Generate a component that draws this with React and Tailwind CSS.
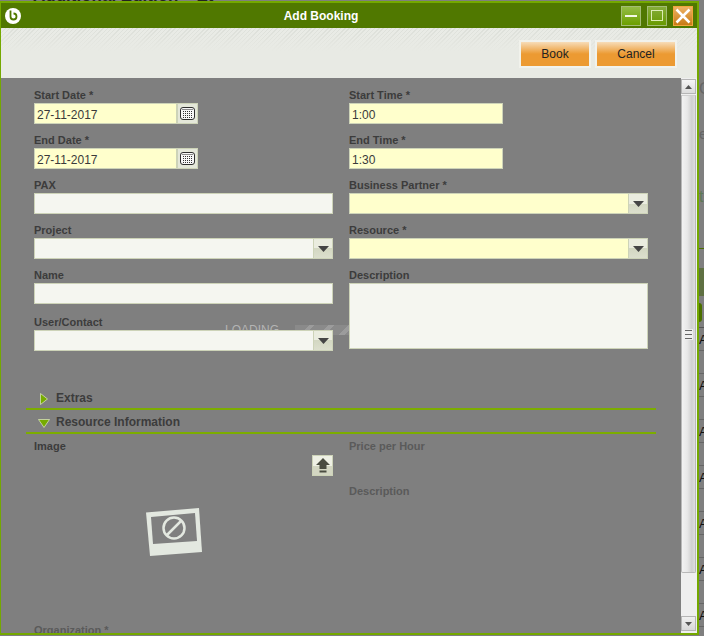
const sans = "font-['Liberation_Sans',Arial,sans-serif]"

function Label({ children, dim }) {
  return (
    <div className={`h-[11px] text-[11px] leading-[11px] font-bold ${dim ? 'text-[#5a5a5a]' : 'text-[#3c3c3c]'}`}>
      {children}
    </div>
  )
}

function Field({ label, children, className = '' }) {
  return (
    <div className={`flex flex-col ${className}`}>
      <Label>{label}</Label>
      <div className="mt-[2px]">{children}</div>
    </div>
  )
}

function TextBox({ value, required, className = 'w-full' }) {
  return (
    <div
      className={`h-[21px] border border-[#cdd3b8] px-[2px] text-[12px] leading-[23px] text-[#3a3a3a] ${required ? 'bg-[#ffffcc]' : 'bg-[#f5f6f0]'} ${className}`}
    >
      {value}
    </div>
  )
}

function Calendar() {
  return (
    <div className="w-[21px] h-[21px] border border-[#cdd3b8] bg-[#e4e7d9] flex items-center justify-center">
      <svg width="15" height="13" viewBox="0 0 15 13">
        <rect x="0.5" y="0.5" width="14" height="12" rx="2.5" fill="#f7f7f7" stroke="#2f2f2f" />
        <path d="M2 2.5h11" stroke="#8a8a8a" />
        {[4, 6, 8, 10].map((y) =>
          [3, 5, 7, 9, 11].map((x) => <rect key={`${x}-${y}`} x={x} y={y} width="1" height="1" fill="#333" />)
        )}
      </svg>
    </div>
  )
}

function DateBox({ value }) {
  return (
    <div className="flex">
      <TextBox value={value} required className="w-[143px]" />
      <Calendar />
    </div>
  )
}

function Arrow() {
  return (
    <div className="w-[20px] h-[21px] border border-[#cdd3b8] bg-[linear-gradient(#eaecdf_0%,#eaecdf_50%,#d3d7c2_50%,#dcdfcd_100%)] flex items-center justify-center">
      <svg width="11" height="6" viewBox="0 0 11 6">
        <path d="M0 0h11L5.500 6z" fill="#454545" />
      </svg>
    </div>
  )
}

function Combo({ required }) {
  return (
    <div className="flex">
      <TextBox required={required} className="flex-1 border-r-0" />
      <Arrow />
    </div>
  )
}

function WindowButton({ className, children }) {
  return <div className={`w-[20px] h-[20px] border flex items-center justify-center ${className}`}>{children}</div>
}

function OrangeButton({ children, className }) {
  return (
    <div className="border-[2px] border-[#f1f2ec]">
      <div className={`h-[24px] pb-[1px] bg-[linear-gradient(#f7dcb8_0%,#ec9a32_50%,#ec9a32_100%)] flex items-center justify-center text-[12px] text-[#222] ${className}`}>
        {children}
      </div>
    </div>
  )
}

function Section({ title, open }) {
  return (
    <div className="h-[24px] border-b-[2px] border-[#7cad00] flex items-center pt-[1px]">
      <div className="w-[30px] flex justify-center pl-[6px]">
        {open ? (
          <svg width="12" height="9" viewBox="0 0 12 9" className="mt-[4px]">
            <path d="M0.5 0.5h11L6 8.5z" fill="#76ab00" stroke="#e2ecc4" strokeWidth="0.7" />
          </svg>
        ) : (
          <svg width="8" height="12" viewBox="0 0 8 12" className="mt-[2px]">
            <path d="M0.500 0.500v11L7.500 6z" fill="#76ab00" stroke="#e2ecc4" strokeWidth="0.7" />
          </svg>
        )}
      </div>
      <span className="text-[12px] font-bold text-[#3c3c3c]">{title}</span>
    </div>
  )
}

function Scrollbar() {
  return (
    <div className="w-[16px] h-full shrink-0 flex flex-col bg-[#efefef] pt-[1px] pr-[1px] pb-[2px]">
      <div className="h-[15px] shrink-0 border border-[#b5b5b5] bg-[linear-gradient(#f6f6f6,#dcdcdc)] flex items-center justify-center">
        <svg width="7" height="4" viewBox="0 0 7 4"><path d="M0 4h7L3.500 0z" fill="#555" /></svg>
      </div>
      <div className="h-[478px] shrink-0 mt-[1px] border border-[#b8b8b8] border-t-[#d0d0d0] rounded-b-[2px] bg-[linear-gradient(90deg,#f2f2f2_0%,#e8e8e8_40%,#d0d0d0_75%,#dedede_100%)] flex items-center justify-center">
        <div className="w-[9px] h-[11px] bg-[#eeeeee] flex flex-col justify-between p-[1px]">
          <div className="h-px bg-[#666]" />
          <div className="h-px bg-[#666]" />
          <div className="h-px bg-[#666]" />
        </div>
      </div>
      <div className="flex-1" />
      <div className="h-[15px] shrink-0 border border-[#b5b5b5] bg-[linear-gradient(#f0f0f0,#d8d8d8)] flex items-center justify-center">
        <svg width="7" height="4" viewBox="0 0 7 4"><path d="M0 0h7L3.500 4z" fill="#555" /></svg>
      </div>
    </div>
  )
}

// slice of the page behind the dialog, visible down its right side
function PageStrip() {
  const rows = [0, 1, 2, 3, 4, 5, 6, 7, 8, 9, 10, 11, 12, 13]
  return (
    <div className="w-[5px] shrink-0 h-full overflow-hidden flex flex-col">
      <div className="h-[81px] shrink-0" />
      <div className="h-[14px] shrink-0 text-[16px] leading-[14px] text-[#666]">C</div>
      <div className="h-[32px] shrink-0" />
      <div className="h-[11px] shrink-0 text-[15px] leading-[11px] text-[#666]">e</div>
      <div className="h-[51px] shrink-0" />
      <div className="h-[14px] shrink-0 text-[16px] leading-[14px] text-[#5e7a55]">t</div>
      <div className="h-[44px] shrink-0" />
      <div className="h-px shrink-0 bg-[#4d6f00]" />
      <div className="h-[19px] shrink-0" />
      <div className="h-[28px] shrink-0 bg-[#5f7042]" />
      <div className="h-[7px] shrink-0" />
      <div className="h-[19px] w-[6px] shrink-0 ml-[-3px] rounded-full bg-[#4c7000]" />
      <div className="h-[5px] shrink-0" />
      <div className="h-px shrink-0 bg-[#555]" />
      {rows.map((i) => (
        <div key={i} className="h-[23px] shrink-0 border-b border-[#666] text-[13px] leading-[24px] text-[#111]">
          {i % 2 === 0 ? 'A' : ''}
        </div>
      ))}
    </div>
  )
}

export default function App() {
  return (
    <div className={`w-[704px] h-[636px] overflow-hidden flex flex-col bg-[#7f7f7f] ${sans}`}>
      <div className="h-[1px] shrink-0 overflow-hidden pl-[33px] flex gap-[18px] text-[17px] leading-[20px] font-bold text-[#222]">
        <div className="mt-[-14px] whitespace-nowrap">Additional Edition</div>
        <div className="mt-[-14px] whitespace-nowrap">Et</div>
      </div>
      <div className="h-[634px] shrink-0 flex">
        <div className="w-[699px] h-full shrink-0 flex flex-col border-l border-r-[2px] border-y-[2px] border-[#74a800] bg-[#7f7f7f]">
          <div className="h-[25px] shrink-0 bg-[#507800] flex items-center pl-[4px] pr-[4px]">
            <svg width="16" height="16" viewBox="0 0 16 16">
              <circle cx="8" cy="8" r="8" fill="#fff" />
              <path d="M5.500 2.500v6a3 3 0 1 0 3-3" fill="none" stroke="#507800" strokeWidth="1.800" />
            </svg>
            <div className="flex-1 text-center text-[12px] font-bold text-white">Add Booking</div>
            <div className="flex gap-[6px]">
              <WindowButton className="border-[#a3bd73] bg-[linear-gradient(#94bc45,#6ca000)]"><div className="w-[12px] h-[2px] bg-[#f4f8e6]" /></WindowButton>
              <WindowButton className="border-[#a3bd73] bg-[linear-gradient(#86ad3a,#689a00)]"><div className="w-[12px] h-[11px] border border-[#dcecb4]" /></WindowButton>
              <WindowButton className="border-[#f2a53c] bg-[linear-gradient(#eeb264,#c87a14)]">
                <svg width="16" height="16" viewBox="0 0 16 16"><path d="M1.500 1.500l13 13M14.500 1.500l-13 13" stroke="#fff" strokeWidth="2.500" /></svg>
              </WindowButton>
            </div>
          </div>
          <div className="h-[50px] shrink-0 bg-[linear-gradient(rgba(232,234,228,0)_0px,#e8eae4_24px),repeating-linear-gradient(135deg,#dcdfd9_0px,#dcdfd9_1px,#e9ebe6_1px,#e9ebe6_3px)] flex items-start justify-end gap-[4px] pt-[12px] pr-[20px]">
            <OrangeButton className="w-[68px]">Book</OrangeButton>
            <OrangeButton className="w-[78px]">Cancel</OrangeButton>
          </div>
          <div className="flex-1 min-h-0 flex">
            <div className="flex-1 min-w-0 h-full overflow-hidden relative">
              <div className="absolute left-[224px] top-[245px] text-[12px] leading-[14px] text-[#b4b4b4]">LOADING</div>
              <div className="absolute left-[294px] top-[247px] w-[55px] h-[10px] bg-[repeating-linear-gradient(135deg,#8a8a8a_0px,#8a8a8a_10px,#9c9c9c_10px,#9c9c9c_14px)]" />
              <div className="relative pl-[33px] pt-[12px] grid grid-cols-[299px_299px] gap-x-[16px] gap-y-[11px]">
                <Field label="Start Date *"><DateBox value="27-11-2017" /></Field>
                <Field label="Start Time *"><TextBox value="1:00" required className="w-[154px]" /></Field>
                <Field label="End Date *"><DateBox value="27-11-2017" /></Field>
                <Field label="End Time *"><TextBox value="1:30" required className="w-[154px]" /></Field>
                <Field label="PAX"><TextBox /></Field>
                <Field label="Business Partner *"><Combo required /></Field>
                <Field label="Project"><Combo /></Field>
                <Field label="Resource *"><Combo required /></Field>
                <Field label="Name"><TextBox /></Field>
                <Field label="Description" className="row-span-2"><div className="h-[66px] border border-[#cdd3b8] bg-[#f5f6f0]" /></Field>
                <Field label="User/Contact" className="mt-[2px]"><Combo /></Field>
              </div>
              <div className="mt-[35px] ml-[25px] w-[630px]">
                <Section title="Extras" />
                <Section title="Resource Information" open />
              </div>
              <div className="pl-[33px] pt-[7px] grid grid-cols-[299px_299px] gap-x-[16px]">
                <div>
                  <Label>Image</Label>
                  <div className="flex justify-end mt-[3px]">
                    <div className="w-[21px] h-[21px] border border-[#cdd3b8] bg-[linear-gradient(#eef0e4_0%,#eef0e4_55%,#d3d6c2_55%)] flex items-center justify-center">
                      <svg width="16" height="17" viewBox="0 0 16 17"><path d="M8 1L15 8h-3.500v4h-7V8H1zM4.500 13.500h7v2h-7z" fill="#4a4c40" /></svg>
                    </div>
                  </div>
                  <div className="flex justify-center pt-[32px] pr-[19px]">
                    <svg width="56" height="48" viewBox="0 0 56 48">
                      <path d="M0 4.500L53 0l3 44L4 48z" fill="#e3e8e0" />
                      <path d="M5 9L49 5l2 28-44 3z" fill="#7f7f7f" />
                      <circle cx="28" cy="20" r="10.500" fill="none" stroke="#e3e8e0" strokeWidth="2.500" />
                      <path d="M21 27l14-14" stroke="#e3e8e0" strokeWidth="2.500" />
                    </svg>
                  </div>
                  <div className="mt-[69px]"><Label dim>Organization *</Label></div>
                </div>
                <div>
                  <Label dim>Price per Hour</Label>
                  <div className="mt-[34px]"><Label dim>Description</Label></div>
                </div>
              </div>
            </div>
            <Scrollbar />
          </div>
        </div>
        <PageStrip />
      </div>
      <div className="h-[1px] shrink-0" />
    </div>
  )
}
